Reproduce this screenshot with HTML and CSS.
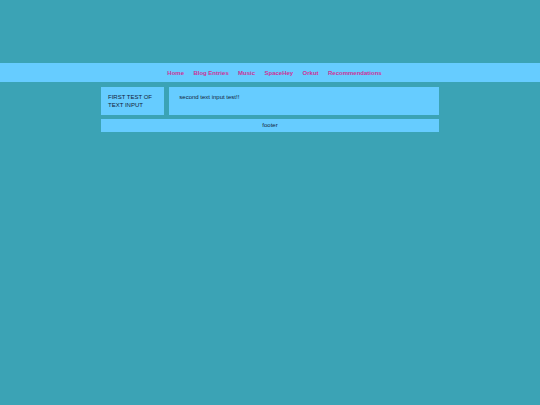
FILE: index.html
```html
<!DOCTYPE html>
<html>
<head>
<meta charset="utf-8">
<link rel="stylesheet" href="styles.css">
</head>
<body>
<header class="topbar">
  <nav class="nav">
    <a href="#">Home</a>
    <a href="#">Blog Entries</a>
    <a href="#">Music</a>
    <a href="#">SpaceHey</a>
    <a href="#">Orkut</a>
    <a href="#">Recommendations</a>
  </nav>
</header>
<div class="container">
  <div class="row">
    <aside class="sidebar">FIRST TEST OF<br>TEXT INPUT</aside>
    <main class="main">second text input test!!</main>
  </div>
  <footer class="footer">footer</footer>
</div>
</body>
</html>
```
FILE: styles.css
```css
html, body {
  margin: 0;
  padding: 0;
}
body {
  background: #3ba3b5;
  font-family: "Liberation Sans", Arial, sans-serif;
  font-size: 6px;
  color: #13233a;
  padding-top: 63px;
}
.topbar {
  background: #66ccff;
  height: 19.3px;
  display: flex;
  align-items: center;
  justify-content: center;
}
.nav {
  display: flex;
  gap: 9.4px;
  padding-left: 9px;
}
.nav a {
  color: #cc3399;
  font-weight: bold;
  text-decoration: none;
}
.container {
  width: 338px;
  margin: 4.7px auto 0;
  display: flex;
  flex-direction: column;
  gap: 4.3px;
}
.row {
  display: flex;
  gap: 5px;
  height: 28px;
}
.sidebar, .main, .footer {
  background: #66ccff;
  line-height: 7.7px;
}
.sidebar {
  width: 63px;
  box-sizing: border-box;
  padding: 7.2px 0 0 7px;
}
.main {
  flex: 1;
  box-sizing: border-box;
  padding: 7.2px 0 0 10.3px;
}
.footer {
  height: 12.4px;
  display: flex;
  align-items: center;
  justify-content: center;
}
```
